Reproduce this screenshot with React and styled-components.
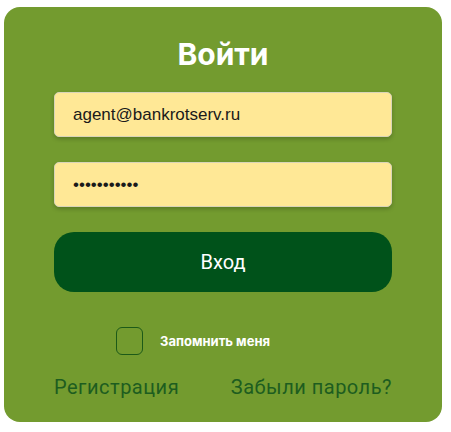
import React, { useState } from 'react'
import styled, { createGlobalStyle } from 'styled-components'

const GlobalStyle = createGlobalStyle`
  html, body {
    margin: 0;
    padding: 0;
    background: #ffffff;
  }
  * {
    box-sizing: border-box;
  }
`

const Card = styled.form`
  width: 438px;
  height: 415px;
  margin: 7px 0 0 4px;
  padding: 29px 50px 0;
  background: #739b2f;
  border-radius: 16px;
  display: flex;
  flex-direction: column;
`

const Title = styled.h1`
  margin: 0 0 20px;
  font-family: Inter, 'Noto Sans', sans-serif;
  font-weight: 700;
  font-size: 30px;
  line-height: 36px;
  color: #ffffff;
  text-align: center;
`

const Field = styled.input`
  display: block;
  width: 100%;
  height: 45px;
  margin-bottom: 25px;
  padding: 0 18px;
  border: 1px solid #d9d4b8;
  border-radius: 5px;
  background: #ffe896;
  box-shadow: 0 2px 4px rgba(0, 0, 0, 0.22);
  font-family: 'Liberation Sans', Arial, sans-serif;
  font-size: 17px;
  color: #1a1a1a;
  outline: none;
`

const Submit = styled.button`
  width: 100%;
  height: 60px;
  border: none;
  border-radius: 20px;
  background: #00521a;
  color: #ffffff;
  font-family: Roboto, 'Noto Sans', sans-serif;
  font-size: 20px;
  cursor: pointer;
`

const RememberRow = styled.label`
  display: flex;
  align-items: center;
  gap: 17px;
  margin: 35px 0 0 62px;
  cursor: pointer;
`

const Box = styled.span`
  width: 27px;
  height: 28px;
  border: 1px solid #1c5a18;
  border-radius: 6px;
  background: ${({ checked }) => (checked ? '#00521a' : 'transparent')};
`

const HiddenCheck = styled.input`
  display: none;
`

const RememberText = styled.span`
  font-family: Inter, 'Noto Sans', sans-serif;
  font-weight: 700;
  font-size: 13px;
  color: #ffffff;
`

const Links = styled.div`
  display: flex;
  justify-content: space-between;
  margin-top: 20px;
`

const TextLink = styled.a`
  font-family: Roboto, 'Noto Sans', sans-serif;
  font-size: 20px;
  letter-spacing: 0.5px;
  color: #1d5d1f;
  text-decoration: none;
`

export default function App() {
  const [remember, setRemember] = useState(false)

  return (
    <>
      <GlobalStyle />
      <Card onSubmit={(e) => e.preventDefault()}>
        <Title>Войти</Title>
        <Field type="email" defaultValue="agent@bankrotserv.ru" />
        <Field type="password" defaultValue="12345678901" />
        <Submit type="submit">Вход</Submit>
        <RememberRow>
          <HiddenCheck
            type="checkbox"
            checked={remember}
            onChange={() => setRemember(!remember)}
          />
          <Box checked={remember} />
          <RememberText>Запомнить меня</RememberText>
        </RememberRow>
        <Links>
          <TextLink href="#">Регистрация</TextLink>
          <TextLink href="#">Забыли пароль?</TextLink>
        </Links>
      </Card>
    </>
  )
}
